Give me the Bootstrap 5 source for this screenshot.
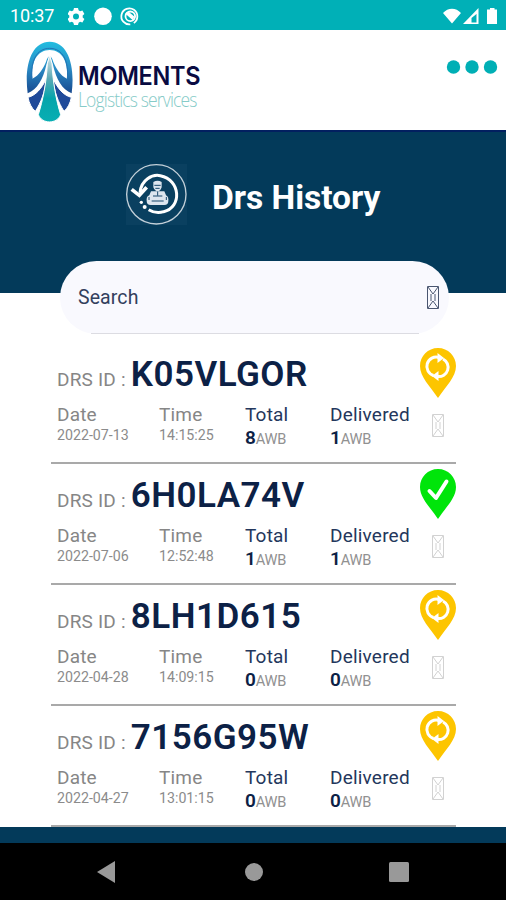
<!DOCTYPE html>
<html lang="en">
<head>
<meta charset="utf-8">
<meta name="viewport" content="width=device-width, initial-scale=1">
<title>Drs History</title>
<link href="https://cdn.jsdelivr.net/npm/bootstrap@5.3.0/dist/css/bootstrap.min.css" rel="stylesheet">
<style>
  body { font-family: Roboto, "Liberation Sans", sans-serif; width: 506px; height: 900px; overflow: hidden; background: #fff; color: #0c2146; }
  svg { display: block; flex: none; }
  .status { height: 30px; background: #00b0b7; color: #fff; font-size: 18px; padding: 2px 8px 0 10px; }
  .clock { width: 58px; line-height: 28px; letter-spacing: -.1px; }
  .brand-bar { height: 100px; padding: 10px 8px 0 25px; }
  .word-1 { font-family: Inter, sans-serif; font-size: 23.5px; line-height: 22px; font-weight: 600; color: #090b42; letter-spacing: -.3px; margin-top: 25px; transform: scaleY(1.1); }
  .word-2 { font-family: "Open Sans", sans-serif; font-size: 17.5px; line-height: 20px; font-weight: 300; color: #86cbc8; letter-spacing: -.85px; white-space: nowrap; margin-top: 2px; transform: scaleY(1.2); }
  .menu { padding-top: 20px; }
  .banner { height: 163px; background: #033a5a; border-top: 2px solid #021f60; padding: 32px 0 0 126px; color: #fff; }
  .banner h1 { font-size: 33.6px; line-height: 40px; margin: 14px 0 0 25px; letter-spacing: -.05px; }
  .search { height: 73px; margin: -32px 57px 0 60px; border-radius: 37px; background: #f9f9fe; padding: 0 10px 0 18px; position: relative; }
  .search::after { content: ""; position: absolute; left: 31px; right: 30px; bottom: 0; height: 1px; background: #dcdce2; }
  .search label { font-size: 19.5px; color: #33405d; letter-spacing: .1px; }
  .search svg { color: #4a5670; }
  .drs-list { padding: 9px 50px 0 51px; }
  .drs { height: 121px; border-bottom: 2px solid #a9a9a9; padding: 5px 0 0 6px; }
  .lbl { font-size: 19px; line-height: 24px; color: #868686; letter-spacing: .2px; }
  .lbl.navy { color: #24375c; }
  .drs-info { padding-top: 6px; }
  .drs-id { font-size: 35px; line-height: 42px; font-weight: 600; padding-left: 5px; letter-spacing: .5px; }
  .facts { display: grid; grid-template-columns: 102px 86px 85px 1fr; padding-top: 7px; }
  .small-val { font-size: 14.2px; line-height: 16px; color: #8b8b8b; }
  .num { font-size: 19px; line-height: 22px; font-weight: 600; }
  .awb { font-size: 14.6px; color: #919191; letter-spacing: -.3px; }
  .marks { width: 36px; }
  .marks .box { color: #d2d2d2; }
  .foot { height: 16px; background: #033a5a; }
  .keys { height: 58px; background: #000; padding: 0 97px; }
</style>
</head>
<body>
<svg width="0" height="0" class="position-absolute">
  <defs>
    <symbol id="pin-sync" viewBox="0 0 36 50">
      <path fill="#fdc500" d="M18 0C8 0 0 8 0 18c0 11 10 20 18 32 8-12 18-21 18-32C36 8 28 0 18 0z"/>
      <g fill="none" stroke="#fff" stroke-width="3"><path d="M13.500 27.500a9.300 9.300 0 0 1 5.500-18M23 11a9.300 9.300 0 0 1-5.500 17.500"/></g>
      <path fill="#fff" d="M17.500 5l6.500 5-6.500 5zM18.500 33L12 28l6.500-5z"/>
    </symbol>
    <symbol id="pin-done" viewBox="0 0 36 50">
      <path fill="#00e50a" d="M18 0C8 0 0 8 0 18c0 11 10 20 18 32 8-12 18-21 18-32C36 8 28 0 18 0z"/>
      <path fill="none" stroke="#fff" stroke-width="4" stroke-linecap="round" stroke-linejoin="round" d="M9.500 22l6.500 7L26.500 12.500"/>
    </symbol>
    <symbol id="tofu" viewBox="0 0 12 23">
      <path fill="none" stroke="currentColor" d="M.5.500h11v22H.5zM1 1l5 7 5-7M1 22l5-7 5 7M4 8v7M8 8v7"/>
    </symbol>
  </defs>
</svg>

<div class="status d-flex align-items-center">
  <span class="clock">10:37</span>
  <svg width="76" height="20" viewBox="0 0 76 20" fill="#fff">
    <path fill-rule="evenodd" d="M6 2h4l.6 2.300 1.500.9 2.300-.7 2 3.500-1.700 1.600v1.800l1.700 1.600-2 3.500-2.300-.7-1.500.9L10 19H6l-.6-2.300-1.500-.9-2.300.7-2-3.500 1.700-1.600V9.600L-.4 8l2-3.500 2.300.7 1.500-.9zM8 7.500a3 3 0 1 0 0 6 3 3 0 0 0 0-6z"/>
    <circle cx="35" cy="10.300" r="8.800"/>
    <g fill="none" stroke="#fff" stroke-width="1.800"><path d="M62.300 18.300a8 8 0 1 1 3.500-1.300"/><circle cx="62.300" cy="10.300" r="4.800"/><path d="M58 7l8 7M60 6.500l6 5"/></g>
  </svg>
  <svg class="ms-auto" width="55" height="20" viewBox="0 0 55 20" fill="#fff">
    <path d="M0 7C5 1.200 13 1.200 18 7l-9 10.500zM35.500 2v16H20zM33.500 8V16.500h-5V12z" fill-rule="evenodd"/>
    <path d="M47 2h4.500v1.500H54V18H44V3.500h3z"/>
  </svg>
</div>

<header class="brand-bar d-flex align-items-start">
  <svg width="53" height="84" viewBox="75 120 159 252">
    <defs>
      <linearGradient id="arch" x1="0" y1="0" x2="0" y2="1"><stop offset="0" stop-color="#22bde0"/><stop offset=".5" stop-color="#2a8cc6"/><stop offset="1" stop-color="#17498f"/></linearGradient>
      <linearGradient id="road" x1="0" y1="0" x2="0" y2="1"><stop offset="0" stop-color="#d9e8ea"/><stop offset=".35" stop-color="#5ba9b6"/><stop offset=".65" stop-color="#04a5ab"/><stop offset="1" stop-color="#08aeb3"/></linearGradient>
    </defs>
    <path fill="url(#arch)" d="M83 280C72 195 95 125 149 125s77 70 66 155c-29-12-46-42-56-85l-10-30-10 30c-10 43-27 73-56 85z"/>
    <path fill="#fff" d="M97 236c-4-50 14-86 52-86s56 36 52 86c-21-10-31-28-41-50-6-22-16-22-22 0-10 22-20 40-41 50z"/>
    <path fill="none" stroke="#2173b5" stroke-width="3" d="M96 236c-5-53 14-91 53-91s58 38 53 91"/>
    <path fill="#1f4a9a" stroke="#fff" stroke-width="3" d="M84 292c24-6 41-27 55-56-4 41-16 71-33 98-11-9-19-25-22-42zM214 292c-24-6-41-27-55-56 4 41 16 71 33 98 11-9 19-25 22-42z"/>
    <path fill="url(#road)" stroke="#fff" stroke-width="3" d="M149 165l7 26c3 60 13 111 26 153-11 29-56 29-67 0 13-42 24-93 27-153z"/>
  </svg>
  <div><div class="word-1">MOMENTS</div><div class="word-2">Logistics services</div></div>
  <svg class="menu ms-auto" width="52" height="34" viewBox="0 0 52 14" fill="#00afb5"><circle cx="7.500" cy="7" r="6.700"/><circle cx="26" cy="7" r="6.700"/><circle cx="44.500" cy="7" r="6.700"/></svg>
</header>

<section class="banner d-flex align-items-start">
  <svg width="61" height="61" viewBox="0 0 183 183">
    <path fill="#0a4060" d="M0 0h183v183H0z"/>
    <circle cx="91" cy="91" r="89" fill="none" stroke="#c3d0d9" stroke-width="4"/>
    <g fill="none" stroke="#fff" stroke-width="9"><path d="M42 86C45 47 79 30 103 35c62 12 65 96 10 108-17 5-32 2-45-6"/><path stroke-width="11" d="M17 76l23 18 22-24"/></g>
    <circle cx="56" cy="129" r="6" fill="#fff"/><circle cx="46" cy="115" r="5" fill="#fff"/>
    <g fill="#dce5ee"><path d="M82 54q13-8 25 0v16q-4 12-12 12T82 70zM75 82h40l6 14H69z"/><rect x="62" y="94" width="65" height="29" rx="12"/></g>
    <path fill="none" stroke="#16476a" stroke-width="3" d="M85 64h19M88 73h13M95 82v13M81 96h28M77 111h36M69 99v9M121 99v9"/>
  </svg>
  <h1 class="fw-bold">Drs History</h1>
</section>

<div class="search d-flex align-items-center justify-content-between">
  <label>Search</label>
  <svg width="12" height="23"><use href="#tofu"/></svg>
</div>

<main class="drs-list">
  <article class="drs d-flex justify-content-between">
    <div class="drs-info flex-grow-1">
      <div class="d-flex align-items-baseline"><span class="lbl">DRS ID :</span><span class="drs-id">K05VLGOR</span></div>
      <div class="facts">
        <div><div class="lbl">Date</div><div class="small-val">2022-07-13</div></div>
        <div><div class="lbl">Time</div><div class="small-val">14:15:25</div></div>
        <div><div class="lbl navy">Total</div><div class="num">8<span class="awb fw-normal">AWB</span></div></div>
        <div><div class="lbl navy">Delivered</div><div class="num">1<span class="awb fw-normal">AWB</span></div></div>
      </div>
    </div>
    <div class="marks d-flex flex-column align-items-center gap-3">
      <svg width="36" height="50"><use href="#pin-sync"/></svg>
      <svg class="box" width="12" height="23"><use href="#tofu"/></svg>
    </div>
  </article>
  <article class="drs d-flex justify-content-between">
    <div class="drs-info flex-grow-1">
      <div class="d-flex align-items-baseline"><span class="lbl">DRS ID :</span><span class="drs-id">6H0LA74V</span></div>
      <div class="facts">
        <div><div class="lbl">Date</div><div class="small-val">2022-07-06</div></div>
        <div><div class="lbl">Time</div><div class="small-val">12:52:48</div></div>
        <div><div class="lbl navy">Total</div><div class="num">1<span class="awb fw-normal">AWB</span></div></div>
        <div><div class="lbl navy">Delivered</div><div class="num">1<span class="awb fw-normal">AWB</span></div></div>
      </div>
    </div>
    <div class="marks d-flex flex-column align-items-center gap-3">
      <svg width="36" height="50"><use href="#pin-done"/></svg>
      <svg class="box" width="12" height="23"><use href="#tofu"/></svg>
    </div>
  </article>
  <article class="drs d-flex justify-content-between">
    <div class="drs-info flex-grow-1">
      <div class="d-flex align-items-baseline"><span class="lbl">DRS ID :</span><span class="drs-id">8LH1D615</span></div>
      <div class="facts">
        <div><div class="lbl">Date</div><div class="small-val">2022-04-28</div></div>
        <div><div class="lbl">Time</div><div class="small-val">14:09:15</div></div>
        <div><div class="lbl navy">Total</div><div class="num">0<span class="awb fw-normal">AWB</span></div></div>
        <div><div class="lbl navy">Delivered</div><div class="num">0<span class="awb fw-normal">AWB</span></div></div>
      </div>
    </div>
    <div class="marks d-flex flex-column align-items-center gap-3">
      <svg width="36" height="50"><use href="#pin-sync"/></svg>
      <svg class="box" width="12" height="23"><use href="#tofu"/></svg>
    </div>
  </article>
  <article class="drs d-flex justify-content-between">
    <div class="drs-info flex-grow-1">
      <div class="d-flex align-items-baseline"><span class="lbl">DRS ID :</span><span class="drs-id">7156G95W</span></div>
      <div class="facts">
        <div><div class="lbl">Date</div><div class="small-val">2022-04-27</div></div>
        <div><div class="lbl">Time</div><div class="small-val">13:01:15</div></div>
        <div><div class="lbl navy">Total</div><div class="num">0<span class="awb fw-normal">AWB</span></div></div>
        <div><div class="lbl navy">Delivered</div><div class="num">0<span class="awb fw-normal">AWB</span></div></div>
      </div>
    </div>
    <div class="marks d-flex flex-column align-items-center gap-3">
      <svg width="36" height="50"><use href="#pin-sync"/></svg>
      <svg class="box" width="12" height="23"><use href="#tofu"/></svg>
    </div>
  </article>
</main>
<div class="foot"></div>
<nav class="keys d-flex align-items-center justify-content-between">
  <svg width="18" height="22" fill="#999"><path d="M18 0v22L0 11z"/></svg>
  <svg width="22" height="18" fill="#999"><circle cx="13" cy="9" r="9"/></svg>
  <svg width="20" height="20" fill="#999"><rect width="20" height="20" rx="1.500"/></svg>
</nav>
<script src="https://cdn.jsdelivr.net/npm/bootstrap@5.3.0/dist/js/bootstrap.bundle.min.js"></script>
</body>
</html>
